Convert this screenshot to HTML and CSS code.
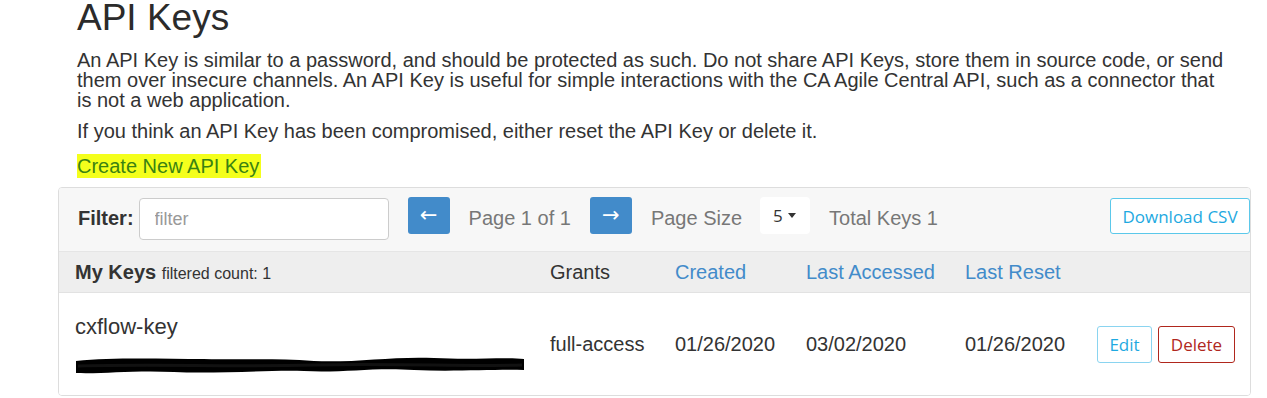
FILE: index.html
```html
<!DOCTYPE html>
<html lang="en">
<head>
    <meta charset="UTF-8">
    <meta name="viewport" content="width=device-width, initial-scale=1.0">
    <title>API Keys</title>
    <link rel="stylesheet" href="styles.css">
</head>
<body>
<div class="page">
    <h1 class="title">API Keys</h1>
    <p class="intro">An API Key is similar to a password, and should be protected as such. Do not share API Keys, store them in source code, or send them over insecure channels. An API Key is useful for simple interactions with the CA Agile Central API, such as a connector that is not a web application.</p>
    <p class="intro">If you think an API Key has been compromised, either reset the API Key or delete it.</p>
    <p class="create"><a href="#" class="create-link">Create New API Key</a></p>

    <div class="panel">
        <div class="toolbar">
            <label class="filter-label" for="filter">Filter:</label>
            <input class="filter-input" type="text" id="filter" placeholder="filter">
            <button class="page-btn">&larr;</button>
            <span class="tool-text">Page 1 of 1</span>
            <button class="page-btn">&rarr;</button>
            <span class="tool-text">Page Size</span>
            <span class="size-select">5<span class="caret"></span></span>
            <span class="tool-text">Total Keys 1</span>
            <button class="btn-csv">Download CSV</button>
        </div>

        <div class="keys-head">
            <div><b class="my-keys">My Keys</b> <span class="count">filtered count: 1</span></div>
            <div>Grants</div>
            <div class="sort">Created</div>
            <div class="sort">Last Accessed</div>
            <div class="sort">Last Reset</div>
            <div></div>
        </div>

        <div class="keys-row">
            <div class="key-cell">
                <div class="key-name">cxflow-key</div>
                <svg class="redacted" width="452" height="20" viewBox="0 0 452 20">
                    <path d="M2,6 C40,2 90,4 130,4 C170,5 200,3 240,6 C280,8 320,1 360,3 C400,5 430,2 450,4 L450,15 C420,14 380,17 340,15 C300,12 270,18 230,16 C190,15 140,19 100,17 C60,15 30,19 2,18 Z" fill="#000"/>
                    <path d="M4,11 C80,9 160,12 240,10 C320,8 400,12 448,10" stroke="#111" stroke-width="3" fill="none"/>
                </svg>
            </div>
            <div>full-access</div>
            <div>01/26/2020</div>
            <div>03/02/2020</div>
            <div>01/26/2020</div>
            <div class="actions">
                <button class="btn-edit">Edit</button>
                <button class="btn-delete">Delete</button>
            </div>
        </div>
    </div>
</div>
</body>
</html>
```

FILE: styles.css
```css
body {
    margin: 0;
    font-family: "Liberation Sans", Arial, sans-serif;
    color: #333;
}

.page {
    padding: 0 16px 0 58px;
}

.title {
    margin: 0 0 0 19px;
    font-size: 37px;
    font-weight: normal;
    line-height: 36px;
    color: #2b2b2b;
}

.intro {
    width: 1150px;
    margin: 14px 0 0 19px;
    font-size: 20px;
    line-height: 20px;
}

.intro + .intro {
    margin-top: 11px;
}

.create {
    margin: 15px 0 11px 19px;
    font-size: 20px;
    line-height: 20px;
}

.create-link {
    color: #3a8212;
    text-decoration: none;
    background: #f4ff1c;
    padding: 1px 2px 1px 0;
}

.panel {
    border: 1px solid #ddd;
    border-radius: 4px;
    overflow: hidden;
}

/* toolbar */
.toolbar {
    display: flex;
    align-items: flex-start;
    padding: 9px 0 11px 19px;
    background: #f7f7f7;
    border-bottom: 1px solid #e5e5e5;
    font-size: 20px;
}

.filter-label {
    font-weight: bold;
    line-height: 42px;
}

.filter-input {
    box-sizing: border-box;
    width: 250px;
    height: 42px;
    margin: 1px 0 0 5px;
    padding: 0 15px;
    border: 1px solid #ccc;
    border-radius: 4px;
    font-family: "Liberation Sans", Arial, sans-serif;
    font-size: 18px;
    color: #555;
}

.filter-input::placeholder {
    color: #999;
}

.page-btn {
    width: 42px;
    height: 37px;
    margin-left: 19px;
    padding: 0;
    border: none;
    border-radius: 3px;
    background: #428bca;
    color: #fff;
    font-family: "DejaVu Sans", sans-serif;
    font-size: 21px;
    line-height: 37px;
}

.tool-text {
    margin-left: 19px;
    line-height: 42px;
    color: #777;
}

.size-select {
    display: flex;
    align-items: center;
    box-sizing: border-box;
    width: 50px;
    height: 37px;
    margin-left: 18px;
    padding-left: 13px;
    background: #fff;
    border-radius: 4px;
    font-family: "Open Sans", sans-serif;
    font-size: 17px;
    color: #333;
}

.caret {
    margin-left: 5px;
    border-top: 5px solid #333;
    border-left: 4px solid transparent;
    border-right: 4px solid transparent;
}

.btn-csv {
    width: 140px;
    height: 36px;
    margin: 1px 0 0 auto;
    padding: 0;
    background: #fff;
    border: 1px solid #5bc8ea;
    border-radius: 3px;
    color: #1ea9e1;
    font-family: "Open Sans", sans-serif;
    font-size: 17px;
}

/* table */
.keys-head,
.keys-row {
    display: grid;
    grid-template-columns: 475px 125px 131px 159px 132px 1fr;
    padding-left: 16px;
    font-size: 20px;
}

.keys-head {
    height: 40px;
    line-height: 40px;
    background: #eee;
    border-bottom: 1px solid #e2e2e2;
}

.my-keys {
    font-size: 20px;
}

.count {
    font-size: 16px;
}

.sort {
    color: #428bca;
}

.keys-row {
    align-items: center;
    background: #fff;
}

.key-cell {
    padding: 21px 0 20px;
}

.key-name {
    font-size: 22px;
    line-height: 26px;
}

.redacted {
    display: block;
    margin-top: 15px;
    margin-left: -1px;
}

.actions {
    display: flex;
    gap: 6px;
}

.btn-edit,
.btn-delete {
    height: 37px;
    padding: 0;
    background: #fff;
    border: 1px solid;
    border-radius: 3px;
    font-family: "Open Sans", sans-serif;
    font-size: 17px;
}

.btn-edit {
    width: 55px;
    border-color: #8ad4f0;
    color: #1ea9e1;
}

.btn-delete {
    width: 77px;
    border-color: #b0271d;
    color: #b0271d;
}
```
